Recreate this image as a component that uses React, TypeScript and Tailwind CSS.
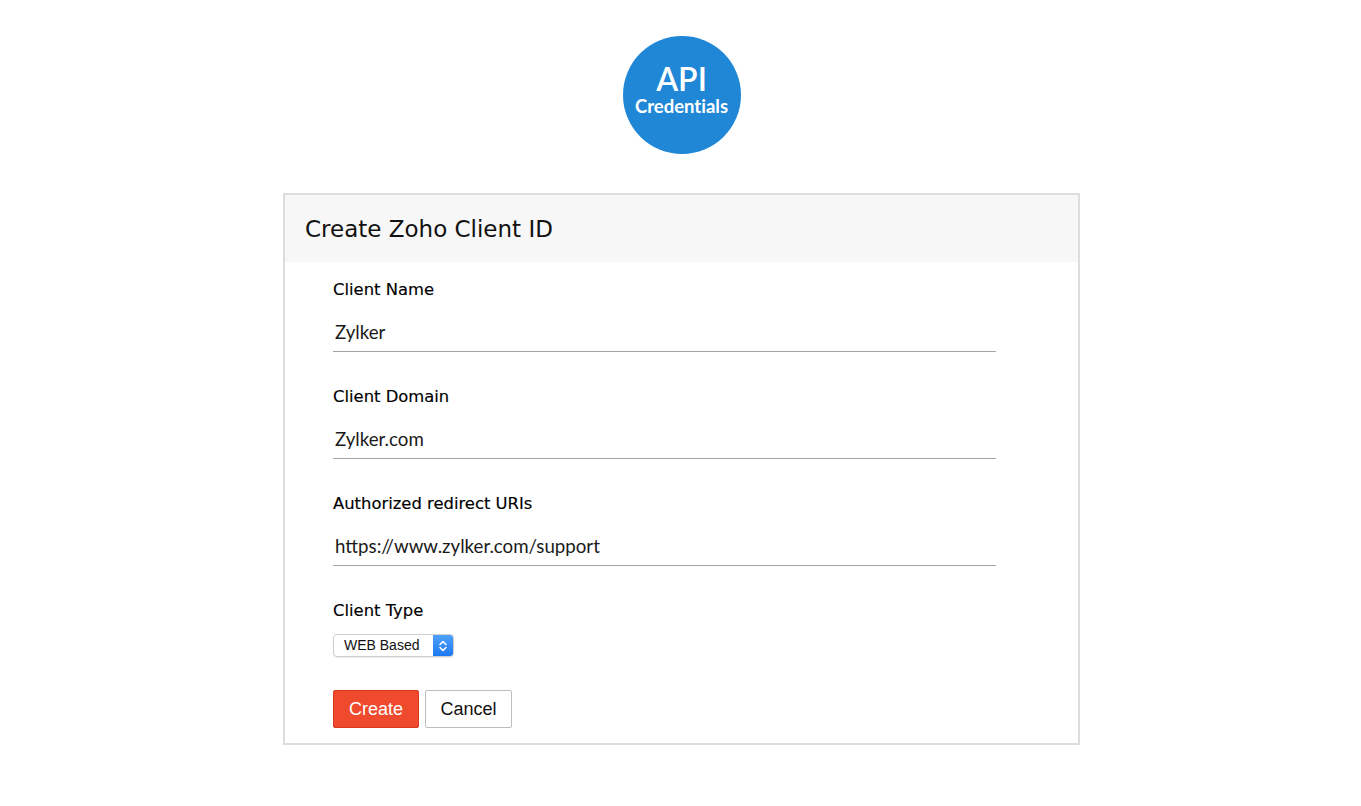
import React from "react";

const labelCls = "h-[20px] leading-[20px] text-[16.4px] text-black [-webkit-text-stroke:0.15px_black]";

function Field({ label, value }: { label: string; value: string }) {
  return (
    <div className="mb-[35px]">
      <div className={labelCls} style={{ fontFamily: '"DejaVu Sans", sans-serif' }}>
        {label}
      </div>
      <div className="mt-[13px] h-[39px] w-[663px] border-b border-[#a3a3a3] flex items-center pl-[2px]">
        <span className="text-[18.7px] text-[#1a1a1a]" style={{ fontFamily: 'Lato, sans-serif' }}>{value}</span>
      </div>
    </div>
  );
}

export default function App() {
  return (
    <div className="min-h-[806px] w-full bg-white pt-[36px]">
      <div className="mx-auto w-[118px] h-[118px] rounded-full bg-[#1f87d6] flex flex-col items-center justify-center text-white translate-x-[1px] [font-variant-ligatures:none] [font-feature-settings:'liga'_0,'clig'_0,'dlig'_0]" style={{ fontFamily: 'Lato, sans-serif' }}>
        <div className="text-[32px] leading-[32px] font-semibold mt-[-10px]">API</div>
        <div className="text-[18.5px] leading-[22px] font-bold">Credentials</div>
      </div>
      <div className="mx-auto mt-[39px] w-[797px] border-2 border-[#dddddd] translate-x-[1px]">
        <div className="h-[67px] bg-[#f7f7f7] flex items-center pl-[20px] pt-[1px]">
          <span className="text-[23px] text-[#111]" style={{ fontFamily: '"DejaVu Sans", sans-serif' }}>Create Zoho Client ID</span>
        </div>
        <div className="pl-[48px] pt-[18px] pb-[15px]">
          <Field label="Client Name" value="Zylker" />
          <Field label="Client Domain" value="Zylker.com" />
          <Field label="Authorized redirect URIs" value="https://www.zylker.com/support" />
          <div className={labelCls} style={{ fontFamily: '"DejaVu Sans", sans-serif' }}>
            Client Type
          </div>
          <div className="mt-[13px] h-[23px] w-[121px] flex rounded-[4px] border border-[#cfcfcf] overflow-hidden shadow-[0_1px_1px_rgba(0,0,0,0.08)]">
            <div className="flex-1 flex items-center pl-[10px] text-[14px] text-[#111]" style={{ fontFamily: '"Liberation Sans", Arial, sans-serif' }}>WEB Based</div>
            <div className="w-[20px] bg-gradient-to-b from-[#4ea1fb] to-[#1b78f2] flex items-center justify-center">
              <svg width="10" height="14" viewBox="0 0 10 14" fill="none" stroke="white" strokeWidth="1.6" strokeLinecap="round" strokeLinejoin="round">
                <path d="M2 5.5 L5 2.5 L8 5.5" />
                <path d="M2 8.5 L5 11.5 L8 8.5" />
              </svg>
            </div>
          </div>
          <div className="mt-[33px] flex gap-[6px]">
            <button className="h-[38px] w-[86px] bg-[#f04a2e] border border-[#d9381f] rounded-[2px] text-white text-[18px]" style={{ fontFamily: '"Liberation Sans", Arial, sans-serif' }}>Create</button>
            <button className="h-[38px] w-[87px] bg-white border border-[#bdbdbd] rounded-[2px] text-[#111] text-[18px]" style={{ fontFamily: '"Liberation Sans", Arial, sans-serif' }}>Cancel</button>
          </div>
        </div>
      </div>
    </div>
  );
}
